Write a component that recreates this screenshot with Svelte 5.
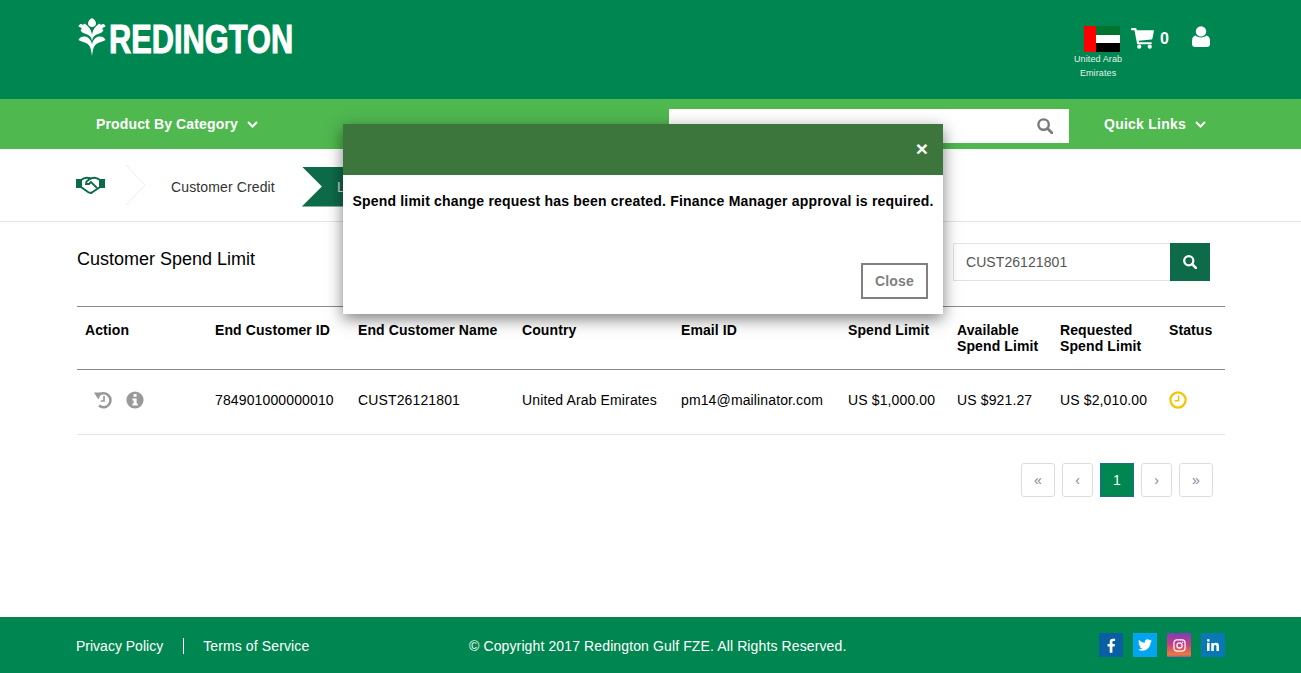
<script>
	const columns = [
		{ label: "Action", width: 130 },
		{ label: "End Customer ID", width: 143 },
		{ label: "End Customer Name", width: 164 },
		{ label: "Country", width: 159 },
		{ label: "Email ID", width: 167 },
		{ label: "Spend Limit", width: 109 },
		{ label: "Available Spend Limit", width: 103 },
		{ label: "Requested Spend Limit", width: 109 },
		{ label: "Status", width: 64 },
	];
	const row = [
		"784901000000010",
		"CUST26121801",
		"United Arab Emirates",
		"pm14@mailinator.com",
		"US $1,000.00",
		"US $921.27",
		"US $2,010.00",
	];
	const pages = ["«", "‹", "1", "›", "»"];
</script>

<div class="page">
	<header class="top">
		<div class="logo">
			<svg width="28" height="38" viewBox="0 0 28 38">
				<path d="M14 0 C16.5 1.5 18 3.5 18 5.5 C18 7.5 16 9 14 9 C12 9 10 7.5 10 5.5 C10 3.5 11.5 1.5 14 0Z" fill="#fff" />
				<path d="M14 38 C13 31 12.5 28 9 25.5 C6 23.5 3 24 .5 22 C1 20 4 18 7 18.5 C10.5 19 13 22 14 26 C15 22 17.5 19 21 18.5 C24 18 27 20 27.5 22 C25 24 22 23.5 19 25.5 C15.5 28 15 31 14 38Z" fill="#fff" />
				<path d="M14 23 C13.5 19 11.5 17 8 16 C5 15 3 14 2.5 12 C3.5 11.5 4 11 3.5 10 L0.5 8.5 C1 6.5 2.5 5.5 4 6.5 C5 7 6 6.5 6.5 5.5 C10.5 8 13.5 12 14 17 C14.5 12 17.5 8 21.5 5.5 C22 6.5 23 7 24 6.5 C25.5 5.5 27 6.5 27.5 8.5 L24.5 10 C24 11 24.5 11.5 25.5 12 C25 14 23 15 20 16 C16.5 17 14.5 19 14 23Z" fill="#fff" />
			</svg>
			<span class="logo-text">REDINGTON</span>
		</div>
		<div class="top-right">
			<div class="country">
				<svg class="flag" width="36" height="26" viewBox="0 0 36 26">
					<rect width="36" height="9" fill="#00732f" />
					<rect y="9" width="36" height="8" fill="#fff" />
					<rect y="17" width="36" height="9" fill="#000" />
					<rect width="12" height="26" fill="#f00" />
				</svg>
				<span>United Arab<br />Emirates</span>
			</div>
			<div class="cart">
				<svg width="23" height="21" viewBox="0 0 24 22">
					<path d="M0 1.2 C0 .5 .5 0 1.2 0 H4.6 C5.3 0 5.6 .5 5.8 1.1 L6 2.4 H23 C23.6 2.4 24 2.9 23.9 3.5 L22.4 11 C22.3 11.6 21.9 12 21.3 12 L8 13.4 L8.3 15 H20.8 C21.4 15 21.8 15.5 21.8 16 C21.8 16.6 21.4 17 20.8 17 H7.2 C6.6 17 6.3 16.6 6.2 16 L3.6 2.4 H1.2 C.5 2.4 0 1.9 0 1.2Z" fill="#fff" />
					<circle cx="8.6" cy="19.6" r="2.2" fill="#fff" />
					<circle cx="19.6" cy="19.6" r="2.2" fill="#fff" />
				</svg>
				<span>0</span>
			</div>
			<svg class="user" width="18" height="21" viewBox="0 0 18 21">
				<circle cx="9" cy="5.4" r="5.2" fill="#fff" />
				<path d="M3.5 9.5 C6 12 12 12 14.5 9.5 C16.8 10 18 12 18 15 V18 C18 19.8 16.8 21 15 21 H3 C1.2 21 0 19.8 0 18 V15 C0 12 1.2 10 3.5 9.5Z" fill="#fff" />
			</svg>
		</div>
	</header>

	<nav class="nav">
		<div class="nav-item category">
			Product By Category
			<svg width="11" height="7" viewBox="0 0 11 7"><path d="M1 1 L5.5 5.5 L10 1" fill="none" stroke="#fff" stroke-width="2" /></svg>
		</div>
		<div class="nav-search">
			<svg width="16" height="16" viewBox="0 0 16 16">
				<circle cx="6.6" cy="6.6" r="5.2" fill="none" stroke="#7a7a7a" stroke-width="2.4" />
				<path d="M10.5 10.5 L15 15" stroke="#7a7a7a" stroke-width="2.8" stroke-linecap="round" />
			</svg>
		</div>
		<div class="nav-item quick">
			Quick Links
			<svg width="11" height="7" viewBox="0 0 11 7"><path d="M1 1 L5.5 5.5 L10 1" fill="none" stroke="#fff" stroke-width="2" /></svg>
		</div>
	</nav>

	<div class="crumbs">
		<svg class="hands" width="29" height="18" viewBox="0 0 29 18">
			<path d="M0 3 H5 V12 H0Z M24 3 H29 V12 H24Z" fill="#0b6b47" />
			<path d="M5 4 C8 1.5 11 1 14.5 2.5 C18 1 21 1.5 24 4 V11 L16 16.5 C14.5 17.3 13.5 17 12 16 L5 11Z" fill="none" stroke="#0b6b47" stroke-width="2" />
			<path d="M14.5 2.5 L10.5 5.5 L10 8 L13 8 L15 6 L21 12" fill="none" stroke="#0b6b47" stroke-width="1.8" />
		</svg>
		<svg class="chev" width="22" height="42" viewBox="0 0 22 42">
			<path d="M1 1 L20 21 L1 41" fill="none" stroke="#eceeee" stroke-width="1" />
		</svg>
		<span class="crumb">Customer Credit</span>
		<div class="crumb-active"><span>Limit</span></div>
	</div>

	<main class="content">
		<div class="title-row">
			<h1>Customer Spend Limit</h1>
			<div class="search">
				<input value="CUST26121801" />
				<button aria-label="Search">
					<svg width="14" height="14" viewBox="0 0 16 16">
						<circle cx="6.6" cy="6.6" r="5.2" fill="none" stroke="#fff" stroke-width="2.6" />
						<path d="M10.5 10.5 L15 15" stroke="#fff" stroke-width="3" stroke-linecap="round" />
					</svg>
				</button>
			</div>
		</div>

		<table>
			<thead>
				<tr>
					{#each columns as col}
						<th style="width: {col.width}px">{col.label}</th>
					{/each}
				</tr>
			</thead>
			<tbody>
				<tr>
					<td class="actions">
						<svg width="18" height="18" viewBox="0 0 18 18">
							<path d="M4.2 4.6 A7 7 0 1 1 5 14.6" fill="none" stroke="#999" stroke-width="2.6" />
							<path d="M0 1.5 H7.5 L4.4 8.4 Z" fill="#999" />
							<path d="M10 5 V10 H6.8" fill="none" stroke="#999" stroke-width="1.7" />
						</svg>
						<svg width="18" height="18" viewBox="0 0 18 18">
							<circle cx="9" cy="9" r="8.6" fill="#999" />
							<rect x="7.6" y="3" width="3" height="2.8" fill="#fff" />
							<path d="M6.4 7.4 H10.6 V12.4 H11.8 V14.4 H6.4 V12.4 H7.6 V9.4 H6.4Z" fill="#fff" />
						</svg>
					</td>
					{#each row as cell}
						<td>{cell}</td>
					{/each}
					<td>
						<svg class="clock" width="18" height="18" viewBox="0 0 18 18">
							<circle cx="9" cy="9" r="7.6" fill="none" stroke="#f2c500" stroke-width="2.2" />
							<path d="M9.6 4.4 V9.8 H5.6" fill="none" stroke="#f2c500" stroke-width="1.6" />
						</svg>
					</td>
				</tr>
			</tbody>
		</table>

		<div class="pagination">
			{#each pages as page}
				<span class="page-btn" class:active={page === "1"} class:wide={page === "«" || page === "»"}>{page}</span>
			{/each}
		</div>
	</main>

	<footer class="footer">
		<div class="foot-links">
			<span class="policy">Privacy Policy</span>
			<span>Terms of Service</span>
		</div>
		<div class="copy">© Copyright 2017 Redington Gulf FZE. All Rights Reserved.</div>
		<div class="social">
			<span class="fb">
				<svg width="9" height="15" viewBox="0 0 10 16"><path d="M3 16 V9 H.6 V6.2 H3 V4 C3 1.6 4.4 .4 6.5 .4 L9 .5 V3 H7.4 C6.3 3 6 3.6 6 4.4 V6.2 H8.8 L8.4 9 H6 V16Z" fill="#fff" /></svg>
			</span>
			<span class="tw">
				<svg width="14" height="12" viewBox="0 0 16 13"><path d="M16 1.5 C15.4 1.8 14.8 2 14.1 2 C14.8 1.6 15.3 1 15.6 .2 C14.9 .6 14.2 .9 13.5 1 C12.9 .4 12 0 11 0 C9.2 0 7.7 1.5 7.7 3.3 C7.7 3.6 7.7 3.8 7.8 4 C5 3.9 2.6 2.6 1.1 .6 C.8 1.1 .7 1.6 .7 2.2 C.7 3.3 1.2 4.3 2.1 4.9 C1.6 4.9 1.1 4.7 .7 4.5 C.7 6.1 1.8 7.5 3.3 7.8 C2.8 7.9 2.3 7.9 1.8 7.8 C2.2 9.1 3.4 10.1 4.9 10.1 C3.4 11.3 1.6 11.8 0 11.6 C1.5 12.5 3.2 13 5 13 C11 13 14.4 8 14.4 3.7 V3.3 C15 2.8 15.6 2.2 16 1.5Z" fill="#fff" /></svg>
			</span>
			<span class="ig">
				<svg width="13" height="13" viewBox="0 0 14 14">
					<rect x="1" y="1" width="12" height="12" rx="3.2" fill="none" stroke="#fff" stroke-width="1.3" />
					<circle cx="7" cy="7" r="2.8" fill="none" stroke="#fff" stroke-width="1.3" />
					<circle cx="10.4" cy="3.6" r=".8" fill="#fff" />
				</svg>
			</span>
			<span class="li">
				<svg width="12" height="12" viewBox="0 0 13 13">
					<rect x="0" y="4.2" width="2.8" height="8.8" fill="#fff" />
					<circle cx="1.4" cy="1.5" r="1.5" fill="#fff" />
					<path d="M4.6 4.2 H7.2 V5.4 C7.7 4.6 8.6 4 9.8 4 C12.2 4 13 5.5 13 7.8 V13 H10.2 V8.4 C10.2 7.3 10 6.4 8.9 6.4 C7.8 6.4 7.4 7.2 7.4 8.3 V13 H4.6Z" fill="#fff" />
				</svg>
			</span>
		</div>
	</footer>

	<div class="modal" role="dialog">
		<div class="modal-head"><span class="x">×</span></div>
		<p>Spend limit change request has been created. Finance Manager approval is required.</p>
		<div class="modal-foot"><span class="close">Close</span></div>
	</div>
</div>

<style>
	:global(body) {
		margin: 0;
		background: #fff;
	}
	.page {
		position: relative;
		width: 1301px;
		height: 673px;
		overflow: hidden;
		display: flex;
		flex-direction: column;
		font-family: "Liberation Sans", Arial, sans-serif;
		font-size: 14px;
		color: #000;
	}
	.top {
		height: 99px;
		flex: none;
		background: #008751;
		display: flex;
		justify-content: space-between;
		align-items: flex-start;
		padding: 0 91px 0 78px;
		box-sizing: border-box;
	}
	.logo {
		display: flex;
		align-items: center;
		gap: 3px;
		margin-top: 18px;
		height: 38px;
		color: #fff;
	}
	.logo-text {
		font-size: 40px;
		font-weight: 700;
		line-height: 42px;
		padding-top: 4px;
		transform: scaleX(0.77);
		transform-origin: left center;
		white-space: nowrap;
		-webkit-text-stroke: 1px #fff;
	}
	.top-right {
		display: flex;
		align-items: flex-start;
		color: #fff;
	}
	.country {
		width: 60px;
		margin-top: 26px;
		margin-right: -2px;
		display: flex;
		flex-direction: column;
		align-items: center;
		text-align: center;
		font-size: 9px;
		line-height: 14px;
		letter-spacing: 0.1px;
		color: #e4f3ec;
	}
	.flag {
		margin: 0 0 0 7px;
	}
	.cart {
		display: flex;
		align-items: center;
		gap: 6px;
		margin: 28px 0 0 5px;
		font-size: 16px;
		font-weight: 700;
	}
	.user {
		margin: 26px 0 0 23px;
	}
	.nav {
		height: 50px;
		flex: none;
		background: #4fb84f;
		position: relative;
		display: flex;
		align-items: center;
		color: #fff;
		font-weight: 700;
	}
	.nav-item {
		display: flex;
		align-items: center;
		gap: 9px;
		letter-spacing: 0.25px;
	}
	.category {
		margin-left: 96px;
		width: 573px;
		letter-spacing: 0.14px;
	}
	.nav-search {
		width: 400px;
		height: 34px;
		margin-top: 4px;
		background: #fff;
		display: flex;
		align-items: center;
		justify-content: flex-end;
		padding-right: 16px;
		box-sizing: border-box;
	}
	.quick {
		margin-left: 35px;
	}
	.crumbs {
		height: 73px;
		flex: none;
		box-sizing: border-box;
		border-bottom: 1px solid #e4e4e4;
		display: flex;
		align-items: center;
		padding-left: 76px;
		padding-top: 3px;
	}
	.hands {
		margin-bottom: 3px;
	}
	.chev {
		margin-left: 20px;
		margin-bottom: 3px;
	}
	.crumb {
		margin-left: 24px;
		color: #333;
		letter-spacing: 0.13px;
	}
	.crumb-active {
		margin-left: 27px;
		width: 120px;
		height: 40px;
		background: #0e6b4a;
		clip-path: polygon(0 0, 100% 0, 100% 100%, 0 100%, 20px 50%);
		color: #ddd;
		display: flex;
		align-items: center;
		padding-left: 35px;
		box-sizing: border-box;
	}
	.content {
		flex: 1;
		padding: 0 76px 0 77px;
	}
	.title-row {
		height: 85px;
		box-sizing: border-box;
		display: flex;
		justify-content: space-between;
		padding: 21px 15px 0 0;
		border-bottom: 1px solid #8a8a8a;
	}
	h1 {
		margin: 6px 0 0;
		font-size: 18px;
		font-weight: 400;
		line-height: 20px;
	}
	.search {
		display: flex;
		height: 38px;
	}
	.search input {
		width: 217px;
		box-sizing: border-box;
		border: 1px solid #e2e2e2;
		border-right: 0;
		padding: 0 12px;
		font: 14px "Liberation Sans", Arial, sans-serif;
		color: #555;
		outline: none;
		letter-spacing: 0.07px;
	}
	.search button {
		width: 40px;
		border: 0;
		padding: 0;
		background: #0e6b4a;
		display: flex;
		align-items: center;
		justify-content: center;
	}
	table {
		border-collapse: collapse;
		table-layout: fixed;
		width: 1148px;
	}
	th {
		height: 62px;
		box-sizing: border-box;
		padding: 15px 8px 0;
		vertical-align: top;
		text-align: left;
		line-height: 16px;
		letter-spacing: 0.1px;
		border-bottom: 1px solid #8a8a8a;
	}
	td {
		height: 65px;
		box-sizing: border-box;
		padding: 0 8px 3px;
		border-bottom: 1px solid #e4e4e4;
		white-space: nowrap;
		overflow: visible;
		letter-spacing: 0.13px;
	}
	td svg {
		display: block;
	}
	.actions {
		padding-left: 17px;
	}
	.actions svg {
		display: inline-block;
		vertical-align: middle;
		margin-right: 10px;
	}
	.pagination {
		display: flex;
		justify-content: flex-end;
		gap: 7px;
		margin-top: 28px;
		padding-right: 12px;
	}
	.page-btn {
		width: 31px;
		height: 34px;
		box-sizing: border-box;
		border: 1px solid #ddd;
		border-radius: 3px;
		display: flex;
		align-items: center;
		justify-content: center;
		color: #7a8a99;
	}
	.page-btn.wide {
		width: 34px;
	}
	.page-btn.active {
		width: 34px;
		background: #008751;
		border-color: #23689b;
		border-radius: 0;
		color: #fff;
	}
	.footer {
		height: 56px;
		flex: none;
		background: #008751;
		color: #fff;
		display: grid;
		grid-template-columns: 393px 1fr auto;
		align-items: center;
		padding: 2px 76px 0;
		box-sizing: border-box;
		letter-spacing: 0.12px;
	}
	.foot-links {
		display: flex;
		align-items: center;
	}
	.policy {
		border-right: 1px solid #fff;
		padding-right: 20px;
		margin-right: 19px;
		letter-spacing: 0;
	}
	.social {
		display: flex;
		gap: 10px;
		margin-top: -2px;
	}
	.social span {
		width: 24px;
		height: 24px;
		display: flex;
		align-items: center;
		justify-content: center;
	}
	.fb {
		background: #0a5fa4;
	}
	.tw {
		background: #03a4f0;
	}
	.ig {
		background: linear-gradient(#7e3fb5, #c43b8a 45%, #f0783a 90%, #8a5cc0);
	}
	.li {
		background: #0a78b4;
	}
	.modal {
		position: absolute;
		left: 343px;
		top: 124px;
		width: 600px;
		height: 190px;
		background: #fff;
		box-shadow: 0 5px 15px rgba(0, 0, 0, 0.5);
	}
	.modal-head {
		height: 51px;
		background: #3c763d;
		display: flex;
		align-items: center;
		justify-content: flex-end;
		padding-right: 15px;
	}
	.x {
		color: #fff;
		font-size: 21px;
		font-weight: 700;
		line-height: 1;
		margin-top: -3px;
	}
	.modal p {
		margin: 18px 0 0;
		text-align: center;
		font-weight: 700;
		line-height: 16px;
		letter-spacing: 0.2px;
	}
	.modal-foot {
		position: absolute;
		right: 15px;
		bottom: 15px;
	}
	.close {
		display: flex;
		align-items: center;
		justify-content: center;
		width: 67px;
		height: 36px;
		box-sizing: border-box;
		border: 2px solid #808080;
		color: #808080;
		font-weight: 700;
		letter-spacing: 0.2px;
	}
</style>
